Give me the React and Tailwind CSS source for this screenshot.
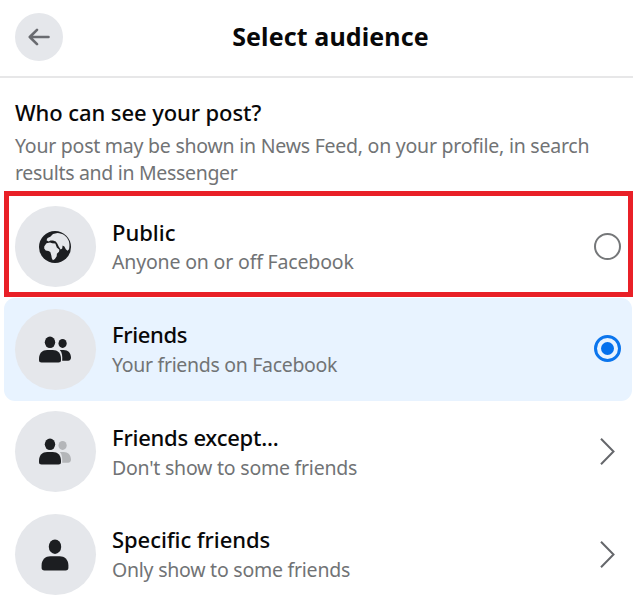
const ink = "#1c1e21";

function PersonIcon() {
  return (
    <svg className="mr-px" width="28" height="32" viewBox="0 0 28 32" fill={ink}>
      <ellipse cx="14" cy="7.700" rx="6.200" ry="7.300" />
      <path d="M0.600 26.500C0.600 20.300 4.600 17.200 9.400 17.200H18.600C23.400 17.200 27.400 20.300 27.400 26.500V28.700C27.400 30.600 26.400 31.400 24.600 31.400H3.400C1.600 31.400 0.600 30.600 0.600 28.700Z" />
    </svg>
  );
}

function FriendsIcon({ faded }) {
  return (
    <svg className="mr-px" width="32" height="27" viewBox="0 0 32 27" fill={ink}>
      <g fill={faded ? "#b4b6b9" : ink}>
        <ellipse cx="23.600" cy="7.400" rx="4.100" ry="4.500" />
        <path d="M20.800 14H24.500C29.200 14 32 17 32 21.600C32 23.700 31 24.700 29.100 24.700H23.200C23.500 20.300 23.200 16.500 20.800 14Z" />
      </g>
      <ellipse cx="11" cy="6.300" rx="5.200" ry="5.800" />
      <path d="M0 22.600C0 17.300 3.500 14 8.200 14H13.800C18.500 14 22 17.300 22 22.600V23.900C22 25.700 21.100 26.400 19.500 26.400H2.500C0.900 26.400 0 25.700 0 23.900Z" />
    </svg>
  );
}

function GlobeIcon() {
  return (
    <svg className="mr-px" width="32" height="32" viewBox="0 0 32 32">
      <circle cx="16" cy="16" r="16" fill={ink} />
      <g fill="#e5e7eb">
        <path d="M7.500 9.200L8.500 7L11.300 5.800L14 3L18.500 1.900C23.500 2 28.200 5.200 29.800 10C30.600 12.500 30.700 15.500 30 18.200L28.600 19.700L26.800 18.200L25.400 15.500L23.600 14.600L23.200 17.400L21.700 18.400L19.800 15.800L18.400 12.800L16.800 10.400L14 9.500L11.500 9.400L9.500 10.500Z" />
        <path d="M5.300 15.300L7.500 12.300L11 11.400L13.200 12.200L16.300 12.600L17.800 16.500L20.400 18.700L20 20.700L17.900 22.700L17.700 25.300L15.900 28L13.900 29.200L12.800 27.200L12.200 24L11.300 21L9.500 19.900L6.700 19.500L5.200 17.400Z" />
      </g>
    </svg>
  );
}

function Radio({ checked }) {
  return checked ? (
    <span className="mb-[2px] flex size-[27px] items-center justify-center rounded-full border-3 border-[#0b75ed]">
      <span className="size-[13px] rounded-full bg-[#0571ed]" />
    </span>
  ) : (
    <span className="size-[27px] rounded-full border-2 border-[#757779]" />
  );
}

function Chevron() {
  return (
    <svg className="mr-[6px]" width="15" height="27" viewBox="0 0 15 27" fill="none" stroke="#65676b" strokeWidth="2">
      <path d="M1 .8L13.500 13.500L1 26.200" />
    </svg>
  );
}

function Row({ className, textClass, icon, title, subtitle, titleClass, subClass, control }) {
  return (
    <div className={`flex shrink-0 items-center pr-[11px] pl-[11px] ${className}`}>
      <span className="flex size-[81px] shrink-0 items-center justify-center rounded-full bg-[#e5e7eb]">{icon}</span>
      <div className={`ml-4 flex flex-1 flex-col whitespace-nowrap ${textClass}`}>
        <div className={`text-[22px] leading-7 font-medium text-[#080809] ${titleClass}`}>{title}</div>
        <div className={`text-[19.500px] leading-7 text-[#717375] ${subClass}`}>{subtitle}</div>
      </div>
      {control}
    </div>
  );
}

export default function App() {
  return (
    <main className="h-[610px] w-[633px] overflow-hidden bg-white font-['Noto_Sans','Open_Sans',sans-serif]">
      <header className="flex h-[78px] items-center border-b-2 border-[#e7e7e8] pl-[15px]">
        <button className="mb-[2px] flex size-12 items-center justify-center rounded-full bg-[#e5e7eb]">
          <svg className="mr-px" width="22" height="18" viewBox="0 0 22 18" fill="none" stroke="#696b70" strokeWidth="2.600" strokeLinecap="round" strokeLinejoin="round">
            <path d="M20.500 9H2M9 1.800L1.800 9L9 16.200" />
          </svg>
        </button>
        <h1 className="mr-[35px] mb-[5px] flex-1 text-center text-[25px] leading-8 font-bold tracking-[0.12px] text-[#080809]">Select audience</h1>
      </header>
      <section className="h-[117px] pt-[19px] pl-[15px] whitespace-nowrap">
        <h2 className="text-[22px] leading-[30px] font-medium tracking-[-0.090px] text-[#080809]">Who can see your post?</h2>
        <p className="mt-[5px] text-[19.500px] leading-[27px] tracking-[-0.240px] text-[#717375]">
          Your post may be shown in News Feed, on your profile, in search<br />
          <span className="tracking-[-0.320px]">results and in Messenger</span>
        </p>
      </section>
      <div className="relative ml-1 flex w-[628px] flex-col">
        <Row className="h-[103px]" textClass="gap-[2px]" icon={<GlobeIcon />} title="Public" titleClass="" subtitle="Anyone on or off Facebook" subClass="tracking-[-0.170px]" control={<Radio />} />
        <Row className="h-[103px] rounded-[11px] bg-[#e8f3ff]" textClass="mb-px gap-[3px]" icon={<FriendsIcon />} title="Friends" titleClass="tracking-[-0.350px]" subtitle="Your friends on Facebook" subClass="tracking-[-0.310px]" control={<Radio checked />} />
        <Row className="h-[101px]" textClass="-mb-px gap-[3px]" icon={<FriendsIcon faded />} title="Friends except..." titleClass="tracking-[-0.240px]" subtitle="Don't show to some friends" subClass="tracking-[-0.230px]" control={<Chevron />} />
        <Row className="h-[105px]" textClass="mb-px gap-[3px]" icon={<PersonIcon />} title="Specific friends" titleClass="tracking-[-0.070px]" subtitle="Only show to some friends" subClass="tracking-[-0.240px]" control={<Chevron />} />
        <div className="pointer-events-none absolute -top-1 left-0 h-[106px] w-[629px] border-5 border-[#e92027]" />
      </div>
    </main>
  );
}
